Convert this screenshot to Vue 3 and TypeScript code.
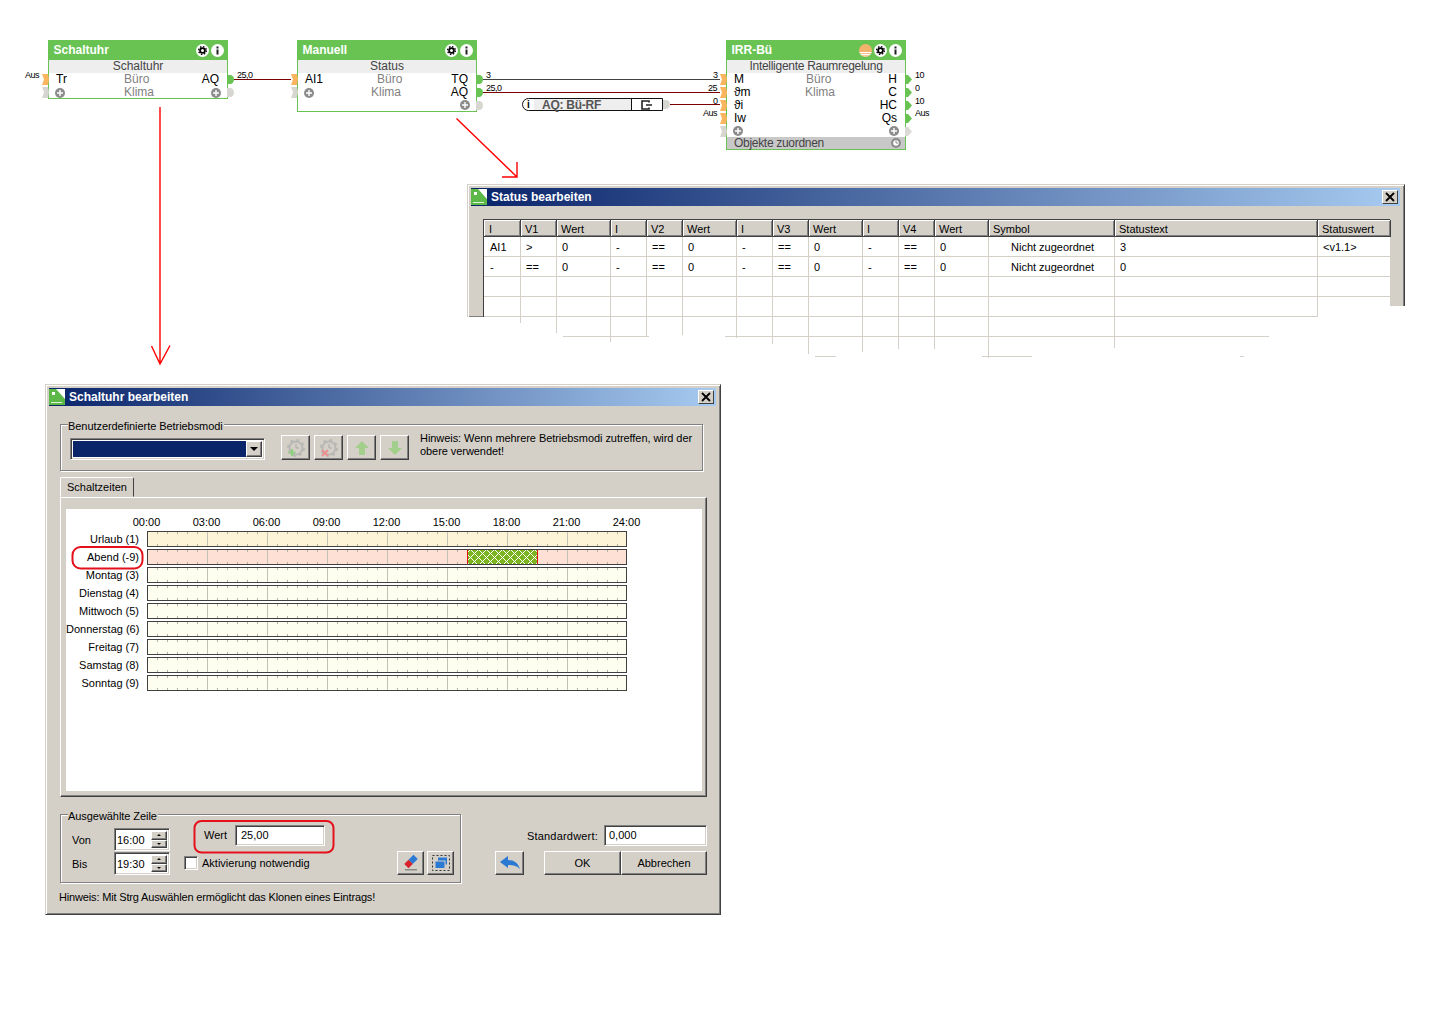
<script setup lang="ts">
interface NodeRow {
  l?: string; lp?: string; mid?: string; midX?: number; r?: string; rp?: string; plusL?: boolean; plusR?: boolean
}
interface FlowNode {
  title: string; sub: string; x: number; y: number; pointed?: boolean; sun?: boolean; assign?: boolean; rows: NodeRow[]
}
const nodes: FlowNode[] = [
  { title: 'Schaltuhr', sub: 'Schaltuhr', x: 48, y: 40, rows: [
    { l: 'Tr', lp: 'on', mid: 'Büro', midX: 75, r: 'AQ', rp: 'on' },
    { lp: 'off', plusL: true, mid: 'Klima', midX: 75, plusR: true, rp: 'off' }
  ] },
  { title: 'Manuell', sub: 'Status', x: 297, y: 40, rows: [
    { l: 'AI1', lp: 'on', mid: 'Büro', midX: 79, r: 'TQ', rp: 'on' },
    { lp: 'off', plusL: true, mid: 'Klima', midX: 73, r: 'AQ', rp: 'on' },
    { plusR: true, rp: 'off' }
  ] },
  { title: 'IRR-Bü', sub: 'Intelligente Raumregelung', x: 726, y: 40, pointed: true, sun: true, assign: true, rows: [
    { l: 'M', lp: 'on', mid: 'Büro', midX: 79, r: 'H', rp: 'on' },
    { l: 'ϑm', lp: 'on', mid: 'Klima', midX: 78, r: 'C', rp: 'on' },
    { l: 'ϑi', lp: 'on', r: 'HC', rp: 'on' },
    { l: 'Iw', lp: 'on', r: 'Qs', rp: 'on' },
    { lp: 'off', plusL: true, plusR: true, rp: 'off' }
  ] }
]
const wireLabels = [
  { t: 'Aus', x: 25, y: 70 }, { t: '25,0', x: 237, y: 70 }, { t: '3', x: 486, y: 70 }, { t: '25,0', x: 486, y: 83 },
  { t: '3', x: 713, y: 70 }, { t: '25', x: 708, y: 83 }, { t: '0', x: 713, y: 96 }, { t: 'Aus', x: 703, y: 108 },
  { t: '10', x: 915, y: 70 }, { t: '0', x: 915, y: 83 }, { t: '10', x: 915, y: 96 }, { t: 'Aus', x: 915, y: 108 }
]
const colWidths = [37, 36, 54, 36, 36, 54, 36, 36, 54, 36, 36, 54, 126, 203, 73]
const gridCols = colWidths.map((w) => w + 'px').join(' ')
const heads = ['I', 'V1', 'Wert', 'I', 'V2', 'Wert', 'I', 'V3', 'Wert', 'I', 'V4', 'Wert', 'Symbol', 'Statustext', 'Statuswert']
const statusRows = [
  ['AI1', '>', '0', '-', '==', '0', '-', '==', '0', '-', '==', '0', 'Nicht zugeordnet', '3', '<v1.1>'],
  ['-', '==', '0', '-', '==', '0', '-', '==', '0', '-', '==', '0', 'Nicht zugeordnet', '0', ''],
  Array(15).fill(''),
  Array(15).fill('')
]
const tornV = [[520, 323], [556, 333], [610, 342], [646, 336], [682, 335], [736, 338], [772, 344], [808, 354], [862, 352], [898, 349], [934, 349], [988, 358], [1114, 348]]
const tornH = [[336, 563, 649], [336, 725, 1269], [356, 815, 836], [356, 982, 1032], [356, 1240, 1244]]
const hours = ['00:00', '03:00', '06:00', '09:00', '12:00', '15:00', '18:00', '21:00', '24:00']
const pxPerHour = 20
const dayRows = [
  { label: 'Urlaub (1)', kind: 'holiday' },
  { label: 'Abend (-9)', kind: 'custom', from: 16, to: 19.5 },
  { label: 'Montag (3)', kind: 'plain' },
  { label: 'Dienstag (4)', kind: 'plain' },
  { label: 'Mittwoch (5)', kind: 'plain' },
  { label: 'Donnerstag (6)', kind: 'plain' },
  { label: 'Freitag (7)', kind: 'plain' },
  { label: 'Samstag (8)', kind: 'plain' },
  { label: 'Sonntag (9)', kind: 'plain' }
]
const spins = [{ label: 'Von', value: '16:00' }, { label: 'Bis', value: '19:30' }]
</script>

<template>
  <div class="canvas">
    <div v-for="n in nodes" :key="n.title" class="node" :style="{ left: n.x + 'px', top: n.y + 'px' }">
      <div class="node-head">
        <span class="node-title">{{ n.title }}</span>
        <span v-if="n.sun" class="ico-sun"></span>
        <svg class="ico" viewBox="0 0 13 13"><circle cx="6.5" cy="6.5" r="6.5" fill="#fff"/><circle cx="6.5" cy="6.5" r="2.4" fill="none" stroke="#000" stroke-width="1.8"/><circle cx="6.5" cy="6.5" r="3.9" fill="none" stroke="#000" stroke-width="1.3" stroke-dasharray="1.5 1.56"/></svg>
        <svg class="ico" viewBox="0 0 13 13"><circle cx="6.5" cy="6.5" r="6.5" fill="#fff"/><rect x="5.5" y="2.5" width="2" height="2" fill="#222"/><rect x="5.5" y="5.5" width="2" height="5" fill="#222"/></svg>
      </div>
      <div class="node-sub" :class="{ long: n.sub.length > 12 }">{{ n.sub }}</div>
      <div class="node-rows">
        <div v-for="(r, i) in n.rows" :key="i" class="row" :style="{ gridTemplateColumns: (r.midX ?? 80) + 'px 1fr auto' }">
          <svg v-if="r.lp" class="port-in" viewBox="0 0 7 11"><polygon points="0,0 6,0 7,5.5 6,11 0,11 2,5.5" :fill="r.lp === 'on' ? '#f9b560' : '#d8d6d0'"/></svg>
          <span class="cell-l">
            <svg v-if="r.plusL" class="plus plus-l" viewBox="0 0 10 10"><circle cx="5" cy="5" r="5" fill="#8c8c8c"/><path d="M5 2v6M2 5h6" stroke="#fff" stroke-width="1.4"/></svg>
            <template v-else>{{ r.l }}</template>
          </span>
          <span class="cell-m">{{ r.mid }}</span>
          <span class="cell-r">
            <svg v-if="r.plusR" class="plus plus-r" viewBox="0 0 10 10"><circle cx="5" cy="5" r="5" fill="#8c8c8c"/><path d="M5 2v6M2 5h6" stroke="#fff" stroke-width="1.4"/></svg>
            <template v-else>{{ r.r }}</template>
          </span>
          <svg v-if="r.rp" class="port-out" viewBox="0 0 7 9">
            <polygon v-if="n.pointed" points="0,0 3,0 7,4.5 3,9 0,9" :fill="r.rp === 'on' ? '#68c352' : '#dcdad4'"/>
            <path v-else d="M0 0h3a4 4.5 0 0 1 0 9H0z" :fill="r.rp === 'on' ? '#68c352' : '#d8d6d0'"/>
          </svg>
        </div>
      </div>
      <div v-if="n.assign" class="node-assign">
        <span>Objekte zuordnen</span>
        <svg class="clock" viewBox="0 0 10 10"><circle cx="5" cy="5" r="5" fill="#8c8c8c"/><circle cx="5" cy="5" r="2.8" fill="#fff"/><path d="M5 3v2h2" stroke="#8c8c8c" stroke-width="1" fill="none"/></svg>
      </div>
    </div>

    <span v-for="(w, i) in wireLabels" :key="'w' + i" class="wire-label" :style="{ left: w.x + 'px', top: w.y + 'px' }">{{ w.t }}</span>

    <div class="aq-box">
      <span class="aq-i">i</span>
      <span class="aq-name">AQ: Bü-RF</span>
      <span class="aq-out">
        <svg viewBox="0 0 12 10" width="12" height="10"><path d="M8 2.5V1H1v8h7V7.5M5 5h6" fill="none" stroke="#222" stroke-width="1.6"/></svg>
      </span>
      <svg class="aq-port" viewBox="0 0 7 9"><path d="M0 0h3a4 4.5 0 0 1 0 9H0z" fill="#d8d6d0"/></svg>
    </div>

    <section class="win status-win">
      <header class="titlebar">
        <svg class="logo" viewBox="0 0 16 16"><rect width="16" height="16" fill="#5cb947"/><polygon points="7,0 16,0 16,10" fill="#fff"/><rect x="3" y="3" width="3" height="3" fill="#fff"/><rect x="2" y="13" width="11" height="1" fill="#dff3d8"/></svg>
        <h2>Status bearbeiten</h2>
        <button class="close"><svg viewBox="0 0 10 10" width="10" height="10"><path d="M1 1l8 8M9 1l-8 8" stroke="#000" stroke-width="1.8"/></svg></button>
      </header>
      <div class="status-table">
        <div class="thead" :style="{ gridTemplateColumns: gridCols }">
          <span v-for="(h, i) in heads" :key="i" class="th">{{ h }}</span>
        </div>
        <div v-for="(row, ri) in statusRows" :key="ri" class="tr" :style="{ gridTemplateColumns: gridCols }">
          <span v-for="(c, ci) in row" :key="ci" class="td" :class="{ sym: ci === 12, lastcol: ci === 14 && ri === 3 }">{{ c }}</span>
        </div>
      </div>
      <div class="cut"></div>
    </section>

    <section class="win clock-win">
      <header class="titlebar">
        <svg class="logo" viewBox="0 0 16 16"><rect width="16" height="16" fill="#5cb947"/><polygon points="7,0 16,0 16,10" fill="#fff"/><rect x="3" y="3" width="3" height="3" fill="#fff"/><rect x="2" y="13" width="11" height="1" fill="#dff3d8"/></svg>
        <h2>Schaltuhr bearbeiten</h2>
        <button class="close"><svg viewBox="0 0 10 10" width="10" height="10"><path d="M1 1l8 8M9 1l-8 8" stroke="#000" stroke-width="1.8"/></svg></button>
      </header>
      <div class="clock-body">
        <div class="group modes">
          <span class="legend">Benutzerdefinierte Betriebsmodi</span>
          <div class="combo sunken">
            <span class="combo-sel"></span>
            <span class="combo-btn raised"><i class="tri-down"></i></span>
          </div>
          <div class="tools">
            <button class="tool raised">
              <svg viewBox="0 0 20 20" width="20" height="20"><circle cx="10" cy="10" r="6.5" fill="none" stroke="#b8b8b4" stroke-width="2"/><circle cx="10" cy="10" r="8" fill="none" stroke="#b8b8b4" stroke-width="2" stroke-dasharray="3 3.3"/><path d="M10 6v4h3" fill="none" stroke="#a8a8a4" stroke-width="1"/><path d="M6 11v7M2.5 14.5h7" stroke="#8fcf83" stroke-width="2.2"/></svg>
            </button>
            <button class="tool raised">
              <svg viewBox="0 0 20 20" width="20" height="20"><circle cx="10" cy="10" r="6.5" fill="none" stroke="#b8b8b4" stroke-width="2"/><circle cx="10" cy="10" r="8" fill="none" stroke="#b8b8b4" stroke-width="2" stroke-dasharray="3 3.3"/><path d="M10 6v4h3" fill="none" stroke="#a8a8a4" stroke-width="1"/><path d="M3 12l6 6M9 12l-6 6" stroke="#e99090" stroke-width="2"/></svg>
            </button>
            <button class="tool raised">
              <svg viewBox="0 0 16 16" width="16" height="16"><polygon points="8,1 15,8 11,8 11,15 5,15 5,8 1,8" fill="#a3cf8c"/></svg>
            </button>
            <button class="tool raised">
              <svg viewBox="0 0 16 16" width="16" height="16"><polygon points="8,15 15,8 11,8 11,1 5,1 5,8 1,8" fill="#a3cf8c"/></svg>
            </button>
          </div>
          <p class="modes-hint">Hinweis: Wenn mehrere Betriebsmodi zutreffen, wird der<br>obere verwendet!</p>
        </div>

        <div class="tab raised-tab">Schaltzeiten</div>
        <div class="panel">
          <div class="sheet">
            <div class="hours">
              <span v-for="h in hours" :key="h" class="hour">{{ h }}</span>
            </div>
            <div class="days">
              <div v-for="d in dayRows" :key="d.label" class="day">
                <span class="day-label">{{ d.label }}</span>
                <div class="bar" :class="d.kind">
                  <div
                    v-if="d.from !== undefined && d.to !== undefined"
                    class="slot"
                    :style="{ left: (d.from * pxPerHour - 1) + 'px', width: ((d.to - d.from) * pxPerHour + 1) + 'px' }"
                  ></div>
                </div>
              </div>
            </div>
          </div>
        </div>

        <div class="lower">
          <div class="group selected">
            <span class="legend">Ausgewählte Zeile</span>
            <div class="times">
              <template v-for="s in spins" :key="s.label">
                <span>{{ s.label }}</span>
                <div class="spin sunken">
                  <span class="spin-val">{{ s.value }}</span>
                  <span class="spin-btns">
                    <span class="spin-btn raised"><i class="tri-up"></i></span>
                    <span class="spin-btn raised"><i class="tri-dn"></i></span>
                  </span>
                </div>
              </template>
            </div>
            <div class="value-col">
              <div class="value-row">
                <span class="value-label">Wert</span>
                <span class="field sunken value-input">25,00</span>
              </div>
              <div class="option-row">
                <span class="check sunken"></span>
                <span class="check-label">Aktivierung notwendig</span>
                <button class="mini raised first">
                  <svg viewBox="0 0 18 18" width="18" height="18"><g transform="rotate(45 9 7.5)"><rect x="6" y="1" width="6" height="7" fill="#2b79d3"/><rect x="6" y="8" width="6" height="6" fill="#d8232a"/></g><rect x="3" y="15" width="12" height="1.5" fill="#8a8a86"/></svg>
                </button>
                <button class="mini raised">
                  <svg viewBox="0 0 20 18" width="20" height="18"><rect x="1.5" y="1.5" width="17" height="15" fill="none" stroke="#333" stroke-dasharray="2 2"/><rect x="7" y="3.5" width="9" height="7" fill="#2b79d3"/><rect x="4" y="7" width="10" height="7.5" fill="#2b79d3" stroke="#d4d0c8"/></svg>
                </button>
              </div>
            </div>
          </div>
          <div class="actions">
            <div class="default-row">
              <span class="default-label">Standardwert:</span>
              <span class="field sunken default-input">0,000</span>
            </div>
            <div class="button-row">
              <button class="mini back raised">
                <svg viewBox="0 0 22 16" width="22" height="16"><path d="M1 7l8-6v4c6 0 10 3 12 9-3-3-6-4-12-4v3z" fill="#2b79d3"/></svg>
              </button>
              <button class="cmd ok raised">OK</button>
              <button class="cmd cancel raised">Abbrechen</button>
            </div>
          </div>
        </div>
        <p class="foot-hint">Hinweis: Mit Strg Auswählen ermöglicht das Klonen eines Eintrags!</p>
      </div>
    </section>

    <svg class="overlay" width="1436" height="1014" viewBox="0 0 1436 1014">
      <path d="M234 79.5H291M483 92.5H720M670 104.5H720" stroke="#7d0000" fill="none"/>
      <path d="M483 79.5H720" stroke="#444" fill="none"/>
      <g stroke="#d4d0c8" fill="none">
        <path v-for="(v, i) in tornV" :key="'v' + i" :d="`M${v[0] + 0.5} 317V${v[1]}`"/>
        <path v-for="(h, i) in tornH" :key="'h' + i" :d="`M${h[1]} ${h[0] + 0.5}H${h[2]}`"/>
      </g>
      <g stroke="#f00" stroke-width="1.4" fill="none">
        <path d="M160 107V363M151.5 346L160 364L170 345.5"/>
        <path d="M456.5 118.5L517 177M502 177H517V162"/>
      </g>
      <g stroke="#e4101c" stroke-width="2" fill="none">
        <rect x="72.5" y="547" width="70" height="21.5" rx="8"/>
        <rect x="194.5" y="821" width="139" height="31.5" rx="7"/>
      </g>
    </svg>
  </div>
</template>

<style scoped>
* { box-sizing: border-box; }
.canvas {
  position: relative;
  width: 1436px;
  height: 1014px;
  overflow: hidden;
  background: #fff;
  font-family: "Liberation Sans", Arial, sans-serif;
  font-size: 12px;
  color: #000;
}
button { font: inherit; color: inherit; padding: 0; margin: 0; background: #d4d0c8; }
h2, p { margin: 0; }

/* flow nodes */
.node {
  position: absolute;
  width: 180px;
  background: #fff;
  border: 1px solid #68c352;
  line-height: 13px;
}
.node-head {
  height: 19px;
  background: #68c352;
  display: flex;
  align-items: center;
  gap: 2px;
  padding: 0 3px 0 4.5px;
  color: #fff;
  font-weight: bold;
}
.node-title { margin-right: auto; }
.ico { width: 13px; height: 13px; display: block; }
.ico-sun {
  width: 13px;
  height: 13px;
  border-radius: 50%;
  background: linear-gradient(#f4b36c 0 58%, #fff 58% 66%, #f6c08a 66% 78%, #fff 78% 86%, #f8cda0 86%);
}
.node-sub { height: 13px; background: #eee; text-align: center; color: #444; }
.node-sub.long { letter-spacing: -0.28px; }
.row { position: relative; display: grid; height: 13px; align-items: center; }
.row:last-child { height: 12px; }
.cell-l { padding-left: 7px; display: flex; align-items: center; }
.cell-m { color: #7f7f7f; white-space: nowrap; }
.cell-r { padding-right: 8px; display: flex; align-items: center; justify-content: flex-end; }
.plus { width: 10px; height: 10px; display: block; }
.plus-l { margin-left: -1px; }
.plus-r { margin-right: -2px; }
.port-in { position: absolute; left: -7px; top: 1px; width: 7px; height: 11px; }
.port-out { position: absolute; right: -7px; top: 2px; width: 7px; height: 9px; }
.node-assign {
  height: 12px;
  background: #c8c8c8;
  color: #444;
  display: flex;
  align-items: center;
  justify-content: space-between;
  padding: 0 4px 0 7px;
  letter-spacing: -0.3px;
}
.clock { width: 10px; height: 10px; display: block; }
.wire-label {
  position: absolute;
  font-size: 9px;
  line-height: 10px;
  letter-spacing: -0.5px;
  color: #000;
}
.aq-box {
  position: absolute;
  left: 522px;
  top: 98px;
  width: 141px;
  height: 13px;
  display: flex;
  border: 1px solid #111;
  border-radius: 7px 0 0 7px;
  background: #fff;
  line-height: 12px;
}
.aq-i { width: 11px; text-align: center; font-weight: bold; font-size: 10px; }
.aq-name { width: 97px; background: #eee; padding-left: 8px; font-weight: bold; color: #555; letter-spacing: -0.25px; }
.aq-out { flex: 1; border-left: 1px solid #111; display: flex; align-items: center; justify-content: center; }
.aq-port { position: absolute; right: -8px; top: 1px; width: 7px; height: 9px; }

/* windows */
.win {
  position: absolute;
  background: #d4d0c8;
  border: 1px solid;
  border-color: #d4d0c8 #404040 #404040 #d4d0c8;
  box-shadow: inset 1px 1px #fff, inset -1px -1px #808080;
  padding: 3px 4px 0 3px;
  font-size: 11px;
}
.titlebar {
  height: 18px;
  display: flex;
  align-items: center;
  background: linear-gradient(90deg, #0a246a, #a6caf0);
  color: #fff;
}
.titlebar h2 { font-size: 12px; font-weight: bold; margin-left: 4px; white-space: nowrap; }
.logo { width: 16px; height: 16px; display: block; }
.close {
  margin-left: auto;
  margin-right: 2px;
  width: 16px;
  height: 14px;
  display: flex;
  align-items: center;
  justify-content: center;
  border: 1px solid;
  border-color: #fff #404040 #404040 #fff;
}
.status-win { left: 467px; top: 184px; width: 938px; height: 133px; border-bottom: 0; }
.status-table { margin: 13px 0 0 12px; width: 907px; border-top: 1px solid #404040; border-left: 1px solid #404040; }
.thead, .tr { display: grid; }
.th {
  height: 17px;
  line-height: 18px;
  padding-left: 4px;
  background: #d4d0c8;
  border-right: 1px solid #404040;
  border-bottom: 1px solid #404040;
  box-shadow: inset 1px 1px #fff, inset -1px -1px #808080;
  white-space: nowrap;
}
.th:first-child { padding-left: 5px; }
.td {
  height: 20px;
  line-height: 20px;
  padding-left: 5px;
  background: #fff;
  border-right: 1px solid #d4d0c8;
  border-bottom: 1px solid #d4d0c8;
  white-space: nowrap;
}
.td:first-child { padding-left: 6px; }
.td.sym { padding-left: 22px; }
.td.lastcol { border-bottom-color: #fff; }
.cut { position: absolute; right: -1px; bottom: 0; width: 15px; height: 11px; background: #fff; }
.clock-win { left: 45px; top: 384px; width: 676px; height: 531px; }
.clock-body { padding: 18px 9px 0 11px; }

.group {
  position: relative;
  border: 1px solid #808080;
  box-shadow: inset 1px 1px #fff, 1px 1px #fff;
}
.legend {
  position: absolute;
  left: 7px;
  top: -5px;
  line-height: 13px;
  padding: 0 1px 0 0;
  background: #d4d0c8;
  white-space: nowrap;
  letter-spacing: -0.06px;
}
.sunken {
  border: 1px solid;
  border-color: #808080 #fff #fff #808080;
  box-shadow: inset 1px 1px #404040, inset -1px -1px #d4d0c8;
  background: #fff;
}
.raised {
  border: 1px solid;
  border-color: #fff #404040 #404040 #fff;
  box-shadow: inset -1px -1px #808080;
  background: #d4d0c8;
}
.modes { width: 643px; height: 47px; display: flex; align-items: flex-start; padding-left: 9px; }
.combo { flex: none; margin-top: 13px; width: 195px; height: 22px; display: flex; padding: 2px; }
.combo-sel { flex: 1; background: #0a246a; }
.combo-btn { width: 16px; display: flex; align-items: center; justify-content: center; }
.tri-down { border: 4px solid transparent; border-top-color: #000; border-bottom-width: 0; }
.tools { flex: none; display: flex; gap: 4px; margin: 10px 0 0 16px; }
.tool { width: 29px; height: 25px; display: flex; align-items: center; justify-content: center; }
.modes-hint { margin: 7px 0 0 11px; line-height: 13px; white-space: nowrap; letter-spacing: -0.06px; }
.tab {
  margin-top: 6px;
  width: 74px;
  height: 20px;
  line-height: 19px;
  text-align: center;
  border: 1px solid;
  border-color: #fff #404040 transparent #fff;
  border-radius: 2px 2px 0 0;
}
.panel {
  width: 647px;
  height: 300px;
  padding: 11px 4px 5px 5px;
  border: 1px solid;
  border-color: #fff #404040 #404040 #fff;
  box-shadow: inset -1px -1px #808080;
}
.sheet { height: 100%; background: #fff; padding-top: 6px; }
.hours { display: flex; margin-left: 50.5px; height: 14px; line-height: 14px; }
.hour { width: 60px; text-align: center; }
.days { margin-top: 2px; display: flex; flex-direction: column; gap: 2px; }
.day { display: grid; grid-template-columns: 73px 480px; gap: 8px; height: 16px; align-items: center; }
.day-label { text-align: right; white-space: nowrap; }
.bar {
  position: relative;
  height: 16px;
  border: 1px solid #404040;
  background-image:
    linear-gradient(to right, #c4c0b4 1px, transparent 1px),
    linear-gradient(to right, #b4b0a4 1px, transparent 1px),
    linear-gradient(to right, #b4b0a4 1px, transparent 1px);
  background-size: 60px 100%, 10px 2px, 10px 2px;
  background-position: -1px 0, -1px top, -1px bottom;
  background-repeat: repeat, repeat-x, repeat-x;
}
.bar.holiday { background-color: #fdf3d6; }
.bar.custom { background-color: #fee0d5; }
.bar.plain { background-color: #fefef0; }
.slot {
  position: absolute;
  top: 0;
  height: 14px;
  border-left: 1px solid #e01010;
  border-right: 1px solid #e01010;
  background-color: #7cb41f;
  background-image:
    repeating-linear-gradient(45deg, #fff 0 1px, transparent 1px 5.66px),
    repeating-linear-gradient(-45deg, #fff 0 1px, transparent 1px 5.66px);
}
.lower { display: flex; margin-top: 17px; }
.selected { flex: none; width: 401px; height: 69px; display: flex; align-items: flex-start; }
.times {
  margin: 13px 0 0 11px;
  display: grid;
  grid-template-columns: 42px 56px;
  grid-auto-rows: 23px;
  row-gap: 1px;
  align-items: center;
}
.spin { height: 23px; display: flex; padding: 2px; align-items: stretch; }
.spin-val { flex: 1; padding-left: 0; line-height: 19px; }
.spin-btns { width: 16px; display: flex; flex-direction: column; }
.spin-btn { flex: 1; display: flex; align-items: center; justify-content: center; }
.tri-up { border: 2.5px solid transparent; border-bottom-color: #000; border-top-width: 0; }
.tri-dn { border: 2.5px solid transparent; border-top-color: #000; border-bottom-width: 0; }
.value-col { margin: 10px 0 0 14px; width: 270px; }
.value-row { height: 21px; display: flex; align-items: center; padding-left: 20px; }
.value-label { width: 31px; margin-top: -1px; }
.field { display: block; height: 21px; line-height: 19px; padding-left: 5px; }
.value-input { width: 90px; }
.option-row { margin-top: 5px; height: 24px; display: flex; align-items: center; }
.check { width: 14px; height: 14px; }
.check-label { margin-left: 4px; }
.mini { flex: none; width: 27px; height: 24px; display: flex; align-items: center; justify-content: center; margin-left: 3px; }
.mini.first { margin-left: auto; }
.actions { flex: 1; padding-top: 11px; }
.default-row { display: flex; justify-content: flex-end; align-items: center; gap: 6px; }
.default-label { letter-spacing: 0.2px; }
.default-input { width: 103px; padding-left: 4px; }
.button-row { display: flex; margin-top: 5px; height: 24px; }
.mini.back { margin-left: 34px; width: 29px; }
.cmd { height: 24px; text-align: center; }
.ok { margin-left: 20px; width: 77px; }
.cancel { width: 86px; }
.foot-hint { margin: 7px 0 0 -1px; line-height: 14px; white-space: nowrap; letter-spacing: -0.16px; }
.overlay { position: absolute; left: 0; top: 0; pointer-events: none; }
</style>
